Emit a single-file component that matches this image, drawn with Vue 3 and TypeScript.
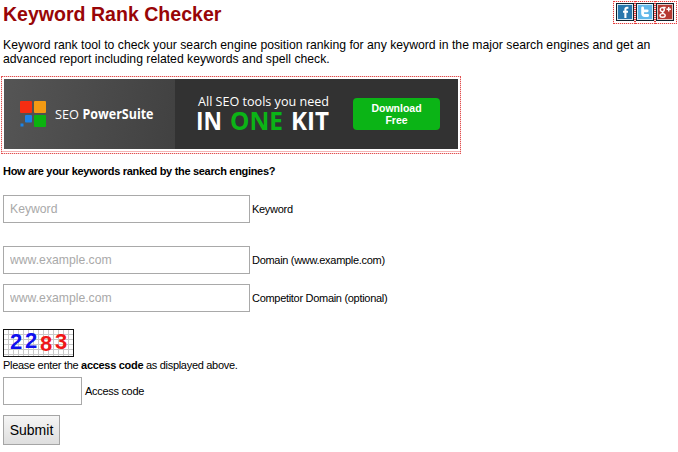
<script setup lang="ts">
import { ref } from 'vue'

interface Field {
  id: string
  label: string
  placeholder: string
}

const fields: Field[] = [
  { id: 'keyword', label: 'Keyword', placeholder: 'Keyword' },
  { id: 'domain', label: 'Domain (www.example.com)', placeholder: 'www.example.com' },
  { id: 'competitor', label: 'Competitor Domain (optional)', placeholder: 'www.example.com' },
]
const values = ref<Record<string, string>>({ keyword: '', domain: '', competitor: '' })
const accessCode = ref('')
</script>

<template>
  <main class="page">
    <header class="top">
      <h1>Keyword Rank Checker</h1>
      <nav class="social">
        <a class="share" aria-label="Facebook">
          <svg width="18" height="18" viewBox="0 0 18 18">
            <rect width="18" height="18" fill="#10202b" />
            <rect x="1" y="1" width="16" height="16" fill="#d5e8f2" />
            <rect x="2" y="2" width="14" height="14" fill="#2877ad" />
            <path d="M12.4 4.8H11q-1.6 0-1.6 1.7V15M7 8.8h5" fill="none" stroke="#fff" stroke-width="2.1" />
          </svg>
        </a>
        <a class="share" aria-label="Twitter">
          <svg width="18" height="18" viewBox="0 0 18 18">
            <rect width="18" height="18" fill="#10202b" />
            <rect x="1" y="1" width="16" height="16" fill="#d9f0fc" />
            <rect x="2" y="2" width="14" height="14" fill="#62b8ea" />
            <path d="M6.6 4.8v5.4q0 2.3 2.3 2.3h2.8M6.6 7.8h4.6" fill="none" stroke="#fff" stroke-width="2.8" stroke-linecap="round" />
          </svg>
        </a>
        <a class="share" aria-label="Google+">
          <svg width="18" height="18" viewBox="0 0 18 18">
            <rect width="18" height="18" fill="#10202b" />
            <rect x="1" y="1" width="16" height="16" fill="#e5c8c4" />
            <rect x="2" y="2" width="14" height="14" fill="#b53a32" />
            <g fill="none" stroke="#fff" stroke-width="1.4">
              <circle cx="6.3" cy="6.6" r="2" />
              <path d="M6.5 4.5h3.2M7 8.5q-1.4 1 .6 2" />
              <ellipse cx="6.6" cy="12.4" rx="2.6" ry="1.8" />
              <path d="M12.7 4v4.4M10.5 6.2h4.4" />
            </g>
          </svg>
        </a>
      </nav>
    </header>

    <p class="intro">
      Keyword rank tool to check your search engine position ranking for any keyword in the major search engines and get an<br />
      advanced report including related keywords and spell check.
    </p>

    <a class="banner-link">
      <div class="banner">
        <div class="brand">
          <svg class="logo" width="27" height="27" viewBox="0 0 27 27">
            <rect x="0" y="0" width="12" height="12" rx="1" fill="#f52d12" />
            <rect x="14" y="0" width="12" height="12" rx="1" fill="#f39a13" />
            <rect x="14" y="14" width="12" height="12" rx="1" fill="#0bb20f" />
            <rect x="5" y="14" width="7" height="7.5" rx="1" fill="#1b83e8" />
            <rect x="0.5" y="22.5" width="3" height="3" fill="#1b83e8" />
          </svg>
          <svg class="lettering" width="110" height="24" viewBox="0 0 110 24" fill="#fff" font-size="13.5">
            <text x="0" y="15" textLength="24" lengthAdjust="spacingAndGlyphs">SEO</text>
            <text x="27.5" y="15" textLength="71" lengthAdjust="spacingAndGlyphs" font-weight="700">PowerSuite</text>
          </svg>
        </div>
        <svg class="lettering" width="178" height="70" viewBox="0 0 178 70" fill="#fff">
          <text x="23" y="27" font-size="13" textLength="131" lengthAdjust="spacingAndGlyphs">All SEO tools you need</text>
          <g font-size="25" font-weight="700">
            <text x="21" y="51" textLength="26" lengthAdjust="spacingAndGlyphs">IN</text>
            <text x="55" y="51" textLength="53" lengthAdjust="spacingAndGlyphs" fill="#0bb416">ONE</text>
            <text x="116" y="51" textLength="38" lengthAdjust="spacingAndGlyphs">KIT</text>
          </g>
        </svg>
        <span class="download">Download<br />Free</span>
      </div>
    </a>

    <h2>How are your keywords ranked by the search engines?</h2>

    <form @submit.prevent>
      <div v-for="f in fields" :key="f.id" class="row" :class="f.id">
        <input :id="f.id" v-model="values[f.id]" type="text" :placeholder="f.placeholder" />
        <label :for="f.id">{{ f.label }}</label>
      </div>

      <svg class="captcha" width="72" height="28" viewBox="0 0 72 28">
        <defs>
          <pattern id="grid" width="5" height="5" patternUnits="userSpaceOnUse">
            <path d="M0 .5H5M.5 0V5" stroke="#c9c9c9" stroke-width="1" />
          </pattern>
        </defs>
        <rect width="71" height="28" fill="#fff" />
        <rect width="71" height="28" fill="url(#grid)" />
        <rect x=".5" y=".5" width="70" height="27" fill="none" stroke="#111" />
        <text class="digit" x="7" y="20.4" fill="#1010ee">2</text>
        <text class="digit" x="22" y="19.4" fill="#1010ee">2</text>
        <text class="digit" x="37" y="22.2" fill="#f01818">8</text>
        <text class="digit" x="52" y="20.2" fill="#f01818">3</text>
      </svg>
      <div class="hint">Please enter the <b>access code</b> as displayed above.</div>
      <div class="row access">
        <input id="code" v-model="accessCode" type="text" />
        <label for="code">Access code</label>
      </div>
      <button type="submit">Submit</button>
    </form>
  </main>
</template>

<style>
body {
  margin: 0;
  background: #fff;
}
</style>

<style scoped>
.page {
  box-sizing: border-box;
  width: 678px;
  height: 452px;
  overflow: hidden;
  padding-left: 3px;
  font-family: 'Liberation Sans', Arial, sans-serif;
  font-size: 11px;
  letter-spacing: -0.3px;
  color: #000;
}
.top {
  display: flex;
  justify-content: space-between;
  height: 38px;
}
h1 {
  margin: 3px 0 0;
  font-size: 19.56px;
  letter-spacing: 0;
  line-height: 23px;
  color: #980507;
  white-space: nowrap;
}
.social {
  display: flex;
  height: 22px;
  margin: 1px 1px 0 0;
}
.share {
  box-sizing: border-box;
  width: 20px;
  height: 23px;
  padding: 1px 0 0;
  border: 1px dotted #e33b3b;
  border-left-width: 1px;
  background: linear-gradient(#fff, #fff) padding-box, #fbd4d4 border-box;
}
.share:first-child {
  width: 22px;
  padding-left: 2px;
}
.share:last-child {
  width: 22px;
}
.share svg {
  display: block;
}
.intro {
  margin: 0;
  font-size: 12.23px;
  letter-spacing: 0;
  line-height: 14px;
  white-space: nowrap;
}
.banner-link {
  display: block;
  box-sizing: border-box;
  width: 460px;
  height: 78px;
  margin: 10px 0 0 -2px;
  padding: 2px 1px 3px 2px;
  border: 1px dotted #e05050;
  background:
    linear-gradient(#f3b4b4, #f3b4b4) 0 calc(100% - 1px) / 100% 1px no-repeat padding-box,
    linear-gradient(#fff, #fff) padding-box,
    #f9cccc border-box;
}
.banner {
  display: flex;
  width: 454px;
  height: 70px;
  background: #323232;
  color: #fff;
}
.brand {
  box-sizing: border-box;
  display: flex;
  align-items: center;
  width: 171px;
  padding-left: 16px;
  background: linear-gradient(100deg, #555, #414141);
}
.logo {
  flex: none;
}
.brand .lettering {
  margin: 3px 0 0 8px;
}
.lettering {
  flex: none;
  font-family: 'Open Sans', sans-serif;
  letter-spacing: 0;
}
.download {
  box-sizing: border-box;
  width: 87px;
  height: 32px;
  margin-top: 19px;
  padding-top: 4px;
  border-radius: 4px;
  background: #0bb416;
  font-size: 10.5px;
  letter-spacing: 0;
  font-weight: 700;
  line-height: 12px;
  text-align: center;
}
h2 {
  margin: 11px 0 0;
  font-size: 11px;
  letter-spacing: -0.31px;
  line-height: 13px;
  white-space: nowrap;
}
.row {
  display: flex;
  align-items: center;
  gap: 2px;
}
.row input {
  box-sizing: border-box;
  width: 247px;
  height: 28px;
  margin: 0;
  padding: 0 6px;
  border: 1px solid #a9a9a9;
  outline: 0;
  background: #fff;
  font: 12.2px 'Liberation Sans', Arial, sans-serif;
}
.row input::placeholder {
  color: #a9a9a9;
  opacity: 1;
}
.keyword {
  margin-top: 17px;
}
.domain {
  margin-top: 23px;
}
.competitor {
  margin-top: 10px;
}
.captcha {
  display: block;
  margin-top: 17px;
}
.digit {
  font: 700 22px 'Liberation Sans', Arial, sans-serif;
  letter-spacing: 0;
}
.hint {
  margin-top: 2px;
  line-height: 13px;
}
.access {
  gap: 3px;
  margin-top: 5px;
}
.access input {
  width: 79px;
}
button {
  display: block;
  box-sizing: border-box;
  width: 57px;
  height: 30px;
  margin: 10px 0 0;
  padding: 0;
  border: 1px solid #a5a5a5;
  border-radius: 0;
  background: linear-gradient(#f5f5f5, #dedede);
  font: 14px 'Liberation Sans', Arial, sans-serif;
  color: #000;
}
</style>
